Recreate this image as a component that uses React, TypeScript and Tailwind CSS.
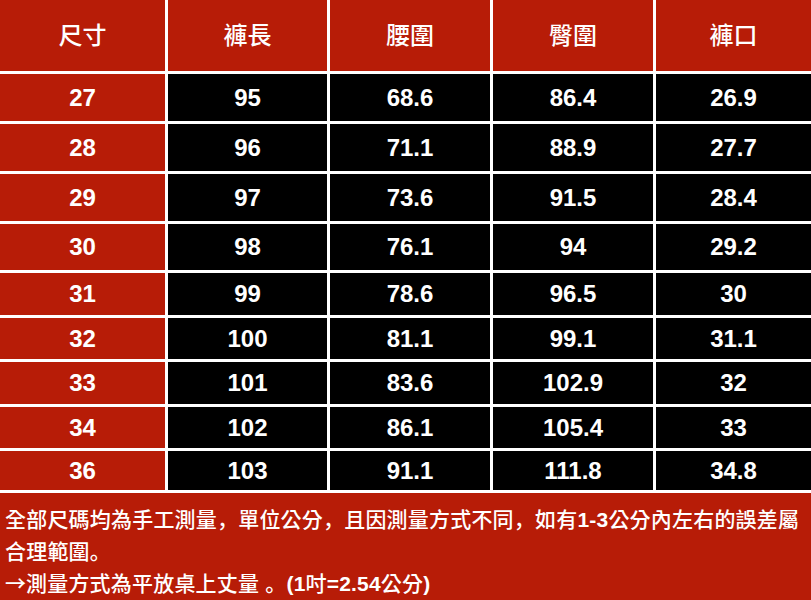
const headers = ["尺寸", "褲長", "腰圍", "臀圍", "褲口"];

const rows = [
  ["27", "95", "68.6", "86.4", "26.9"],
  ["28", "96", "71.1", "88.9", "27.7"],
  ["29", "97", "73.6", "91.5", "28.4"],
  ["30", "98", "76.1", "94", "29.2"],
  ["31", "99", "78.6", "96.5", "30"],
  ["32", "100", "81.1", "99.1", "31.1"],
  ["33", "101", "83.6", "102.9", "32"],
  ["34", "102", "86.1", "105.4", "33"],
  ["36", "103", "91.1", "111.8", "34.8"],
];

// punctuation sits bottom-left in the reference, like the SC glyphs
function P({ c }: { c: string }) {
  return <span style={{ fontFamily: "'Noto Sans CJK SC', sans-serif" }}>{c}</span>;
}

export default function App() {
  return (
    <div
      className="w-[811px] h-[600px] overflow-hidden bg-[#b71c07] text-white"
      style={{ fontFamily: "'Liberation Sans', 'Noto Sans CJK TC', sans-serif" }}
    >
      <div className="grid grid-cols-[165px_159px_160px_160px_155px] grid-rows-[71px_47px_47px_47px_46px_42px_41px_42px_41px_39px] gap-[3px] bg-white border-b-[3px] border-white">
        {headers.map((h) => (
          <div key={h} className="flex items-center justify-center bg-[#b71c07] text-[24px] font-medium">
            {h}
          </div>
        ))}
        {rows.map((r) =>
          r.map((v, i) => (
            <div
              key={r[0] + "-" + i}
              className={
                "flex items-center justify-center text-[24px] font-bold " +
                (i === 0 ? "bg-[#b71c07]" : "bg-black")
              }
            >
              {v}
            </div>
          ))
        )}
      </div>
      <div className="pl-[5px] pt-[10px] text-[21px] leading-[31px] font-medium tracking-[0.2px]">
        <p className="whitespace-nowrap">
          全部尺碼均為手工測量<P c="，" />單位公分<P c="，" />且因測量方式不同<P c="，" />如有<span className="font-bold">1-3</span>公分內左右的誤差屬
        </p>
        <p>
          合理範圍<P c="。" />
        </p>
        <p>
          <span className="inline-block w-[21px] text-center" style={{ fontFamily: "'Noto Sans CJK TC', sans-serif" }}>→</span>測量方式為平放桌上丈量 <P c="。" /><span className="font-bold">(1</span>吋<span className="font-bold">=2.54</span>公分<span className="font-bold">)</span>
        </p>
      </div>
    </div>
  );
}
